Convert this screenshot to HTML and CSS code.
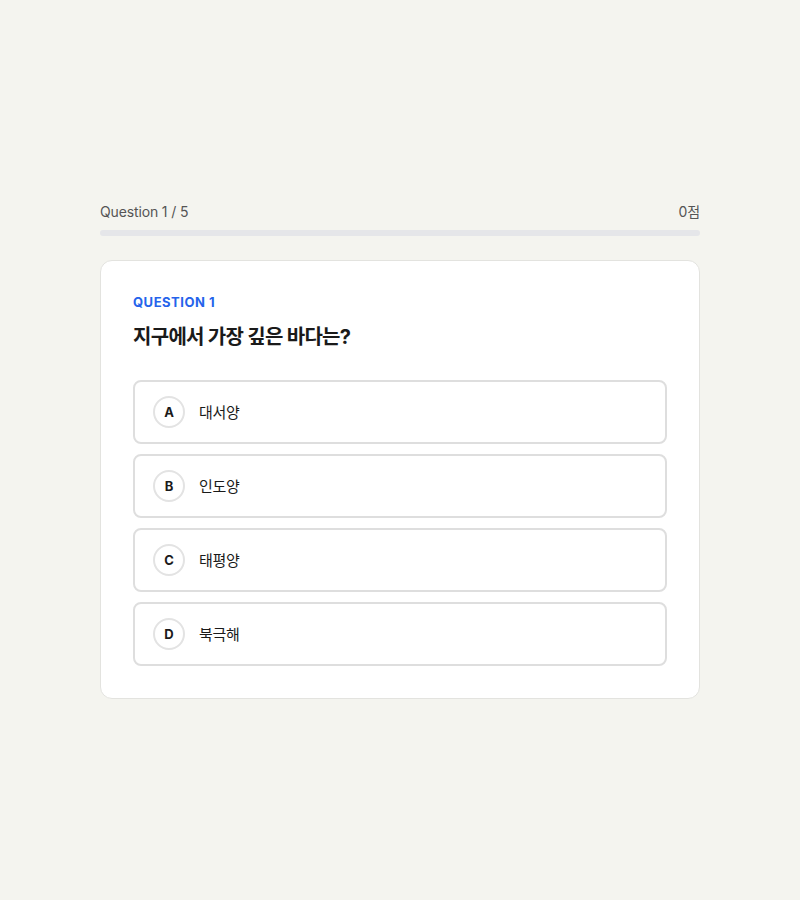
FILE: index.html
```html
<!DOCTYPE html>
<html lang="ko">
<head>
<meta charset="utf-8">
<title>Quiz</title>
<link rel="stylesheet" href="styles.css">
</head>
<body>
<main class="quiz">
  <div class="progress-head">
    <span>Question 1 / 5</span>
    <span>0점</span>
  </div>
  <div class="progress-track"><div class="progress-fill" style="width:0%"></div></div>
  <section class="card">
    <div class="q-label">QUESTION 1</div>
    <h1 class="q-title">지구에서 가장 깊은 바다는?</h1>
    <div class="options">
      <button class="option"><span class="letter">A</span><span class="opt-text">대서양</span></button>
      <button class="option"><span class="letter">B</span><span class="opt-text">인도양</span></button>
      <button class="option"><span class="letter">C</span><span class="opt-text">태평양</span></button>
      <button class="option"><span class="letter">D</span><span class="opt-text">북극해</span></button>
    </div>
  </section>
</main>
</body>
</html>
```
FILE: styles.css
```css
* { box-sizing: border-box; }
html, body { margin: 0; padding: 0; }
body {
  background: #f4f4ef;
  font-family: Inter, "Noto Sans CJK KR", sans-serif;
  color: #1a1a1a;
  min-height: 900px;
  display: flex;
  align-items: center;
  justify-content: center;
}
.quiz { width: 600px; }
.progress-head {
  display: flex;
  justify-content: space-between;
  font-size: 14px;
  line-height: 20px;
  color: #555;
  letter-spacing: -0.01em;
  margin-bottom: 8px;
}
.progress-track {
  height: 6px;
  background: #e5e6e9;
  border-radius: 3px;
  overflow: hidden;
  margin-bottom: 24px;
}
.progress-fill { height: 100%; background: #2563eb; }
.card {
  background: #fff;
  border: 1px solid #e3e3df;
  border-radius: 12px;
  padding: 32px;
}
.q-label {
  font-size: 13px;
  line-height: 18px;
  font-weight: 700;
  letter-spacing: 0.04em;
  color: #2563eb;
  margin-bottom: 12px;
}
.q-title {
  margin: 0 0 29px;
  font-size: 20px;
  line-height: 28px;
  font-weight: 700;
  color: #1a1a1a;
  letter-spacing: -0.035em;
}
.options { display: flex; flex-direction: column; gap: 10px; }
.option {
  display: flex;
  align-items: center;
  gap: 14px;
  height: 64px;
  padding: 0 18px;
  background: #fff;
  border: 2px solid #dedede;
  border-radius: 8px;
  font-family: inherit;
  text-align: left;
  cursor: pointer;
}
.letter {
  width: 32px;
  height: 32px;
  border-radius: 50%;
  border: 2px solid #e3e3e3;
  display: flex;
  align-items: center;
  justify-content: center;
  font-size: 13px;
  font-weight: 700;
  color: #1a1a1a;
  flex-shrink: 0;
}
.opt-text { font-size: 15px; color: #1a1a1a; letter-spacing: -0.02em; }
```
